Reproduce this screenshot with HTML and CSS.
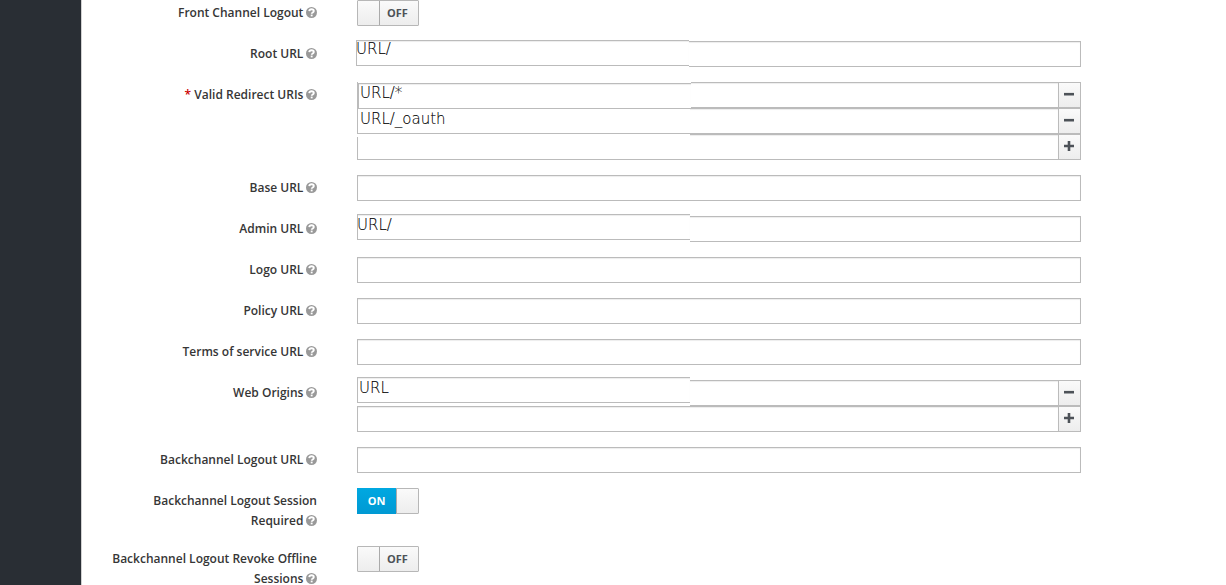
FILE: index.html
```
<!DOCTYPE html>
<html lang="en">
<head>
<meta charset="utf-8">
<title>Client settings</title>
<link rel="stylesheet" href="styles.css">
</head>
<body>
<svg class="defs" aria-hidden="true">
  <symbol id="help" viewBox="0 0 10 10">
    <circle cx="5" cy="5" r="5" fill="#999"/>
    <path d="M2.9 3.7C3.2 1.4 7.1 1.5 7.1 3.7C7.1 5 5.2 4.9 5.2 6.2" fill="none" stroke="#fff" stroke-width="1.7"/>
    <path d="M4.3 6.9h1.7v1.6H4.3z" fill="#fff"/>
  </symbol>
  <symbol id="minus" viewBox="0 0 10 10"><path d="M0 3.9h10v2.6H0z" fill="#4d5258"/></symbol>
  <symbol id="plus" viewBox="0 0 10 10"><path d="M3.7 0h2.6v3.7H10v2.6H6.3V10H3.7V6.3H0V3.7h3.7z" fill="#4d5258"/></symbol>
</svg>
<div class="page">
  <nav class="sidebar"></nav>
  <main class="form">
    <div class="row">
      <label class="label">Front Channel Logout <svg class="help"><use href="#help"/></svg></label>
      <div class="switch"><span class="knob"></span><span class="state">OFF</span></div>
    </div>
    <div class="row">
      <label class="label">Root URL <svg class="help"><use href="#help"/></svg></label>
      <div class="fields"><div class="field"><div class="input"></div><div class="value value-root">URL/</div></div></div>
    </div>
    <div class="row">
      <label class="label"><span class="required">*</span> Valid Redirect URIs <svg class="help"><use href="#help"/></svg></label>
      <div class="fields">
        <div class="field"><div class="input"></div><div class="button"><svg class="sign"><use href="#minus"/></svg></div><div class="value value-redirect">URL/*</div></div>
        <div class="field"><div class="input"></div><div class="button"><svg class="sign"><use href="#minus"/></svg></div><div class="value value-oauth">URL/_oauth</div></div>
        <div class="field"><div class="input"></div><div class="button"><svg class="sign"><use href="#plus"/></svg></div></div>
      </div>
    </div>
    <div class="row">
      <label class="label">Base URL <svg class="help"><use href="#help"/></svg></label>
      <div class="fields"><div class="field"><div class="input"></div></div></div>
    </div>
    <div class="row">
      <label class="label">Admin URL <svg class="help"><use href="#help"/></svg></label>
      <div class="fields"><div class="field"><div class="input"></div><div class="value value-admin">URL/</div></div></div>
    </div>
    <div class="row">
      <label class="label">Logo URL <svg class="help"><use href="#help"/></svg></label>
      <div class="fields"><div class="field"><div class="input"></div></div></div>
    </div>
    <div class="row">
      <label class="label">Policy URL <svg class="help"><use href="#help"/></svg></label>
      <div class="fields"><div class="field"><div class="input"></div></div></div>
    </div>
    <div class="row">
      <label class="label">Terms of service URL <svg class="help"><use href="#help"/></svg></label>
      <div class="fields"><div class="field"><div class="input"></div></div></div>
    </div>
    <div class="row">
      <label class="label">Web Origins <svg class="help"><use href="#help"/></svg></label>
      <div class="fields">
        <div class="field"><div class="input"></div><div class="button"><svg class="sign"><use href="#minus"/></svg></div><div class="value value-origin">URL</div></div>
        <div class="field"><div class="input"></div><div class="button"><svg class="sign"><use href="#plus"/></svg></div></div>
      </div>
    </div>
    <div class="row">
      <label class="label">Backchannel Logout URL <svg class="help"><use href="#help"/></svg></label>
      <div class="fields"><div class="field"><div class="input"></div></div></div>
    </div>
    <div class="row">
      <label class="label">Backchannel Logout Session Required <svg class="help"><use href="#help"/></svg></label>
      <div class="switch on"><span class="state">ON</span><span class="knob"></span></div>
    </div>
    <div class="row">
      <label class="label">Backchannel Logout Revoke Offline Sessions <svg class="help"><use href="#help"/></svg></label>
      <div class="switch"><span class="knob"></span><span class="state">OFF</span></div>
    </div>
  </main>
</div>
</body>
</html>
```
FILE: styles.css
```
* { box-sizing: border-box; }

body {
  margin: 0;
  background: #fff;
  color: #363636;
  font: 600 12px/20px "Open Sans", sans-serif;
}

.defs { display: none; }

.page {
  display: flex;
  height: 585px;
  overflow: hidden;
}

.sidebar {
  flex: none;
  width: 82px;
  background: #292e34;
  border-right: 1px solid #d1d1d1;
}

.form {
  display: flex;
  flex-direction: column;
  gap: 15px;
  width: 999px;
}

.row {
  display: grid;
  flex: none;
  grid-template-columns: 235px 724px;
  column-gap: 40px;
  align-items: start;
}

.label {
  padding: 3px 0 0 20px;
  text-align: right;
}

.required { color: #c00; }

.help {
  width: 11px;
  height: 11px;
  margin-left: -0.5px;
  vertical-align: -1px;
}

.field {
  position: relative;
  display: flex;
  height: 26px;
}

.input {
  flex: 1;
  background: #fff;
  border: 1px solid #bbb;
  box-shadow: inset 0 1px 1px rgba(3, 3, 3, 0.075);
}

.button {
  display: flex;
  align-items: center;
  justify-content: center;
  width: 23px;
  margin-left: -1px;
  padding: 0 1px 2px 0;
  border: 1px solid #bbb;
  background: linear-gradient(#fafafa, #ededed);
}

.sign {
  width: 10px;
  height: 10px;
}

/* Values sit on a masking box that is offset from the field below it. */
.value {
  position: absolute;
  z-index: 1;
  left: 0;
  width: 333px;
  height: 26px;
  background: #fff;
  border: 1px solid #bbb;
  border-right: 0;
  box-shadow: inset 0 1px 1px rgba(3, 3, 3, 0.075), 0 1px #fff;
  color: #000;
  font: 200 15px/17px "DejaVu Sans Light", "DejaVu Sans", sans-serif;
  -webkit-text-stroke: 0.1px #000;
  white-space: pre;
}

.value-root { left: -1px; top: -1px; text-indent: -1px; line-height: 16px; }
.value-redirect { left: 1px; top: 1px; text-indent: 1px; line-height: 19px; box-shadow: inset 0 1px 1px rgba(3, 3, 3, 0.075), 0 -1px #fff; }
.value-oauth { top: 0; text-indent: 2px; line-height: 20px; box-shadow: 0 3px #fff; }
.value-admin { top: -2px; box-shadow: inset 0 1px 1px rgba(3, 3, 3, 0.075), 0 2px #fff; text-indent: -1px; line-height: 21px; }
.value-origin { top: -3px; box-shadow: inset 0 1px 1px rgba(3, 3, 3, 0.075), 0 3px #fff; text-indent: 1px; line-height: 21px; }

.switch {
  display: flex;
  width: 62px;
  height: 26px;
  border: 1px solid #b7b7b7;
  border-radius: 1px;
  background: linear-gradient(#fafafa, #ededed);
  color: #4d5258;
  font-size: 11px;
  font-weight: 700;
  line-height: 24px;
}

.knob {
  width: 22px;
  border-right: 1px solid #aaa;
  background: linear-gradient(#fafafa, #ededed);
}

.state {
  flex: 1;
  padding-right: 3px;
  text-align: center;
}

.on .state {
  margin: -1px 0 -1px -1px;
  padding: 1px 0 0;
  background: linear-gradient(#00a8e1, #0099d3);
  color: #fff;
}

.on .knob {
  border-right: 0;
  border-left: 1px solid #aaa;
}
```
